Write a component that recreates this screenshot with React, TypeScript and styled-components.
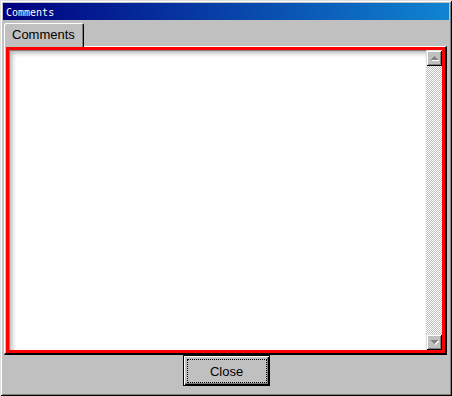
import React from "react";
import styled, { createGlobalStyle } from "styled-components";

const Global = createGlobalStyle`
  html, body { margin: 0; padding: 0; background: #c0c0c0; }
  * { box-sizing: border-box; }
`;

const Window = styled.div`
  width: 452px;
  height: 396px;
  background: #c0c0c0;
  padding: 3px;
  display: flex;
  flex-direction: column;
  box-shadow: inset 1px 1px 0 #dfdfdf, inset -1px -1px 0 #000,
    inset 2px 2px 0 #fff, inset -2px -2px 0 #808080;
`;

const TitleBar = styled.div`
  height: 17px;
  display: flex;
  align-items: flex-end;
  padding-left: 3px;
  padding-bottom: 2px;
  background: linear-gradient(90deg, #000080 0%, #1084d0 100%);
`;

const Title = styled.span`
  font-family: "DejaVu Sans Mono", "Liberation Mono", monospace;
  font-size: 10px;
  color: #fff;
  line-height: 1;
`;

const TabStrip = styled.div`
  margin-top: 3px;
  padding-left: 1px;
  height: 23px;
  display: flex;
  align-items: flex-end;
  position: relative;
  z-index: 1;
`;

const Tab = styled.div`
  width: 80px;
  height: 24px;
  margin-bottom: -1px;
  background: #c0c0c0;
  display: flex;
  align-items: center;
  padding-left: 8px;
  padding-bottom: 1px;
  font-family: "Liberation Sans", Arial, sans-serif;
  font-size: 13px;
  color: #000;
  border-top-left-radius: 2px;
  border-top-right-radius: 2px;
  box-shadow: inset 1px 1px 0 #fff, inset -1px 0 0 #000, inset -2px 0 0 #808080;
`;

const Panel = styled.div`
  margin: 0 2px 0 1px;
  height: 309px;
  display: flex;
  border-top: 1px solid #fff;
  border-left: 1px solid #fff;
  border-right: 2px solid #000;
  border-bottom: 2px solid #000;
  padding-left: 1px;
`;

const RedFrame = styled.div`
  flex: 1;
  display: flex;
  border: 3px solid #ff0000;
`;

const Editor = styled.div`
  flex: 1;
  display: flex;
  background: #fff;
`;

const TextArea = styled.div`
  flex: 1;
  background: #fff;
  box-shadow: inset 1px 1px 0 #808080, inset 3px 3px 5px rgba(0, 0, 0, 0.3);
`;

const ScrollBar = styled.div`
  width: 16px;
  display: flex;
  flex-direction: column;
`;

const ScrollButton = styled.div`
  width: 16px;
  height: 16px;
  background: #c0c0c0;
  box-shadow: inset 1px 1px 0 #dfdfdf, inset -1px -1px 0 #000,
    inset 2px 2px 0 #fff, inset -2px -2px 0 #808080;
  svg { display: block; }
`;

const Track = styled.div`
  flex: 1;
  background-image: conic-gradient(#c0c0c0 25%, #fff 0 50%, #c0c0c0 0 75%, #fff 0);
  background-size: 2px 2px;
`;

const Footer = styled.div`
  flex: 1;
  display: flex;
  justify-content: center;
  align-items: flex-start;
`;

const Button = styled.div`
  width: 87px;
  height: 31px;
  border: 1px solid #000;
  background: #c0c0c0;
  padding: 3px 2px 2px 3px;
  display: flex;
  box-shadow: inset 1px 1px 0 #fff, inset -1px -1px 0 #000, inset -2px -2px 0 #808080;
`;

const Focus = styled.div`
  flex: 1;
  border: 1px dotted #000;
  display: flex;
  align-items: center;
  justify-content: center;
  font-family: "Liberation Sans", Arial, sans-serif;
  font-size: 13px;
  color: #000;
`;

const upRows: [number, number, number][] = [
  [6, 8, 1],
  [7, 7, 3],
  [8, 6, 5],
  [9, 5, 7],
];
const downRows: [number, number, number][] = [
  [6, 5, 7],
  [7, 6, 5],
  [8, 7, 3],
  [9, 8, 1],
];

const Arrow = ({ dir }: { dir: "up" | "down" }) => {
  const rows = dir === "up" ? upRows : downRows;
  return (
    <svg width="16" height="16" viewBox="0 0 16 16" shapeRendering="crispEdges">
      {rows.map(([y, x, w]) => (
        <rect key={"s" + y} x={x + 1} y={y + 1} width={w} height={1} fill="#fff" />
      ))}
      {rows.map(([y, x, w]) => (
        <rect key={"a" + y} x={x} y={y} width={w} height={1} fill="#808080" />
      ))}
    </svg>
  );
};

export default function App() {
  return (
    <>
      <Global />
      <Window>
        <TitleBar>
          <Title>Comments</Title>
        </TitleBar>
        <TabStrip>
          <Tab>Comments</Tab>
        </TabStrip>
        <Panel>
          <RedFrame>
            <Editor>
              <TextArea />
              <ScrollBar>
                <ScrollButton>
                  <Arrow dir="up" />
                </ScrollButton>
                <Track />
                <ScrollButton>
                  <Arrow dir="down" />
                </ScrollButton>
              </ScrollBar>
            </Editor>
          </RedFrame>
        </Panel>
        <Footer>
          <Button>
            <Focus>Close</Focus>
          </Button>
        </Footer>
      </Window>
    </>
  );
}
